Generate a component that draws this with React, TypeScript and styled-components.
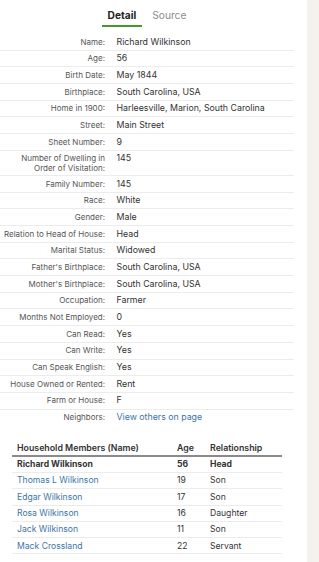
import React, { useState } from "react";
import styled, { createGlobalStyle } from "styled-components";

const GlobalStyle = createGlobalStyle`
    html, body {
        margin: 0;
        padding: 0;
        background: #ffffff;
    }
    body {
        font-family: Inter, "Liberation Sans", Arial, sans-serif;
        color: #333333;
    }
`

const Page = styled.div`
    display: flex;
    min-height: 562px;
`

const Main = styled.div`
    width: 307px;
    flex-shrink: 0;
`

const Aside = styled.div`
    flex: 1;
    background-color: #f5f1ee;
`

const Content = styled.div`
    width: 294px;
`

const Tabs = styled.div`
    display: flex;
    justify-content: center;
    gap: 4px;
    padding-top: 7px;
    margin-bottom: 7px;
`

const Tab = styled.div<{ $active?: boolean }>`
    font-size: 10.2px;
    line-height: 17px;
    padding: 0 6px 1px;
    font-weight: ${p => p.$active ? 700 : 400};
    color: ${p => p.$active ? "#222222" : "#8c8c8c"};
    border-bottom: 2px solid ${p => p.$active ? "#4a962c" : "transparent"};
    cursor: pointer;
`

const Facts = styled.div`
    display: flex;
    flex-direction: column;
`

const FactRow = styled.div<{ $last?: boolean }>`
    display: grid;
    grid-template-columns: 105px 1fr;
    column-gap: 11.5px;
    align-items: baseline;
    padding: 1.5px 0;
    border-bottom: 1px solid ${p => p.$last ? "transparent" : "#ececec"};
`

const Label = styled.div`
    font-size: 8px;
    line-height: 10.2px;
    color: #555555;
    text-align: right;
`

const Value = styled.div`
    font-size: 8.8px;
    line-height: 12.67px;
    color: #333333;
`

const Link = styled.a`
    color: #3b74a6;
    text-decoration: none;
    cursor: pointer;
`

const Table = styled.table`
    margin: 15px 0 0 12px;
    width: 270px;
    border-collapse: collapse;
    table-layout: fixed;
`

const Th = styled.th<{ $w: number }>`
    box-sizing: border-box;
    width: ${p => p.$w}px;
    text-align: left;
    font-size: 8.8px;
    line-height: 12px;
    font-weight: 600;
    color: #333333;
    padding: 0.5px 5px 1px;
    border-bottom: 2px solid #8a8a8a;
`

const Td = styled.td<{ $head?: boolean; $link?: boolean }>`
    font-size: 8.6px;
    line-height: 12.3px;
    padding: 1.5px 5px;
    font-weight: ${p => p.$head ? 700 : 400};
    color: ${p => p.$link ? "#3b74a6" : "#333333"};
    border-bottom: 1px solid #ececec;
`

const facts: Array<[string, string]> = [
    ["Name:", "Richard Wilkinson"],
    ["Age:", "56"],
    ["Birth Date:", "May 1844"],
    ["Birthplace:", "South Carolina, USA"],
    ["Home in 1900:", "Harleesville, Marion, South Carolina"],
    ["Street:", "Main Street"],
    ["Sheet Number:", "9"],
    ["Number of Dwelling in Order of Visitation:", "145"],
    ["Family Number:", "145"],
    ["Race:", "White"],
    ["Gender:", "Male"],
    ["Relation to Head of House:", "Head"],
    ["Marital Status:", "Widowed"],
    ["Father's Birthplace:", "South Carolina, USA"],
    ["Mother's Birthplace:", "South Carolina, USA"],
    ["Occupation:", "Farmer"],
    ["Months Not Employed:", "0"],
    ["Can Read:", "Yes"],
    ["Can Write:", "Yes"],
    ["Can Speak English:", "Yes"],
    ["House Owned or Rented:", "Rent"],
    ["Farm or House:", "F"],
]

const household = [
    { name: "Richard Wilkinson", age: "56", rel: "Head", head: true },
    { name: "Thomas L Wilkinson", age: "19", rel: "Son" },
    { name: "Edgar Wilkinson", age: "17", rel: "Son" },
    { name: "Rosa Wilkinson", age: "16", rel: "Daughter" },
    { name: "Jack Wilkinson", age: "11", rel: "Son" },
    { name: "Mack Crossland", age: "22", rel: "Servant" },
]

const App = () => {
    const [tab, setTab] = useState("detail")

    return (
        <>
            <GlobalStyle />
            <Page>
                <Main>
                    <Content>
                        <Tabs>
                            <Tab $active={tab === "detail"} onClick={() => setTab("detail")}>Detail</Tab>
                            <Tab $active={tab === "source"} onClick={() => setTab("source")}>Source</Tab>
                        </Tabs>

                        <Facts>
                            {facts.map(([label, value]) =>
                                <FactRow key={label}>
                                    <Label>{label}</Label>
                                    <Value>{value}</Value>
                                </FactRow>
                            )}
                            <FactRow $last>
                                <Label>Neighbors:</Label>
                                <Value><Link>View others on page</Link></Value>
                            </FactRow>
                        </Facts>
                    </Content>

                    <Table>
                        <thead>
                            <tr>
                                <Th $w={160}>Household Members (Name)</Th>
                                <Th $w={33}>Age</Th>
                                <Th $w={77}>Relationship</Th>
                            </tr>
                        </thead>
                        <tbody>
                            {household.map(m =>
                                <tr key={m.name}>
                                    <Td $head={m.head} $link={!m.head}>{m.name}</Td>
                                    <Td $head={m.head}>{m.age}</Td>
                                    <Td $head={m.head}>{m.rel}</Td>
                                </tr>
                            )}
                        </tbody>
                    </Table>
                </Main>
                <Aside />
            </Page>
        </>
    )
}

export default App
